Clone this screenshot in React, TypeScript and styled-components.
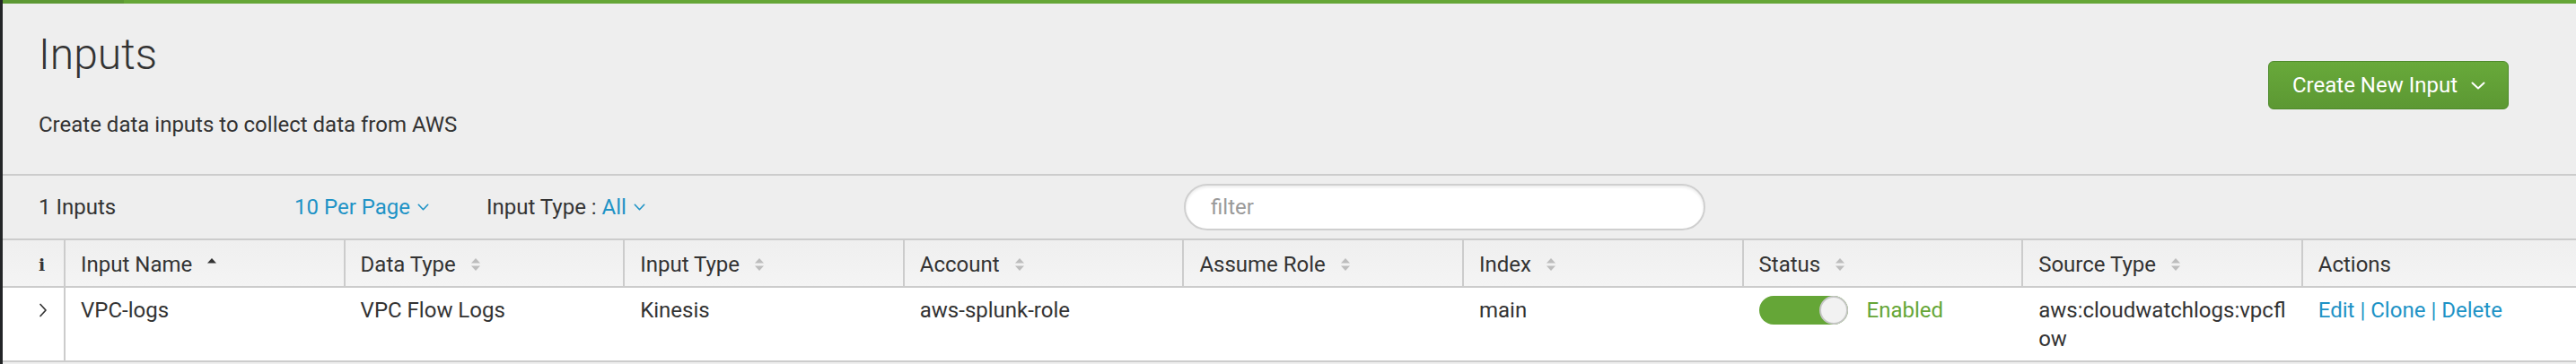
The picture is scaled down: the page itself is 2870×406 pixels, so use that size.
import React from 'react';
import styled, { createGlobalStyle } from 'styled-components';

const GlobalStyle = createGlobalStyle`
  html, body { margin: 0; padding: 0; background: #eeeeee; }
  body { font-family: Roboto, "Liberation Sans", Arial, sans-serif; color: #333333; }
  * { box-sizing: border-box; }
`;

const GREEN = '#65a637';
const BLUE = '#1e93c6';
const LINE = '#cccccc';

const Page = styled.div`
  border-left: 3px solid #232527;
  background: #eeeeee;
  min-height: 406px;
  overflow: hidden;
`;

const LoadBar = styled.div`
  height: 4px;
  background: ${GREEN};
  display: flex;
`;

const LoadDone = styled.div<{ $w: number }>`
  width: ${(p) => p.$w}px;
  background: #5c9834;
`;

const Header = styled.header`
  display: flex;
  justify-content: space-between;
  align-items: flex-start;
  padding: 29px 75px 39px 40px;
  border-bottom: 2px solid ${LINE};
`;

const TitleBlock = styled.div`
  display: flex;
  flex-direction: column;
`;

const Title = styled.h1`
  margin: 0;
  font-size: 48px;
  font-weight: 300;
  line-height: 56px;
  color: #333333;
`;

const Subtitle = styled.p`
  margin: 34px 0 0;
  font-size: 24px;
  line-height: 32px;
  color: #333333;
`;

const PrimaryButton = styled.button`
  margin-top: 35px;
  height: 54px;
  padding: 0 25px 0 26px;
  display: inline-flex;
  align-items: center;
  gap: 15px;
  font-family: Roboto, "Liberation Sans", Arial, sans-serif;
  font-size: 24px;
  color: #ffffff;
  background: linear-gradient(to bottom, #68a93a, #5c9833);
  border: 1px solid #4e8a2b;
  border-radius: 6px;
  cursor: pointer;
`;

const Toolbar = styled.div`
  display: flex;
  align-items: center;
  height: 72px;
  padding-left: 40px;
  border-bottom: 2px solid ${LINE};
`;

const ToolItem = styled.div<{ $w: number }>`
  width: ${(p) => p.$w}px;
  flex: none;
  font-size: 24px;
  line-height: 32px;
  display: flex;
  align-items: center;
  white-space: nowrap;
`;

const Dropdown = styled.span`
  color: ${BLUE};
  display: inline-flex;
  align-items: center;
  gap: 8px;
  cursor: pointer;
`;

const FilterInput = styled.input`
  width: 581px;
  height: 52px;
  flex: none;
  border: 2px solid #cfcfcf;
  border-radius: 26px;
  background: #ffffff;
  box-shadow: inset 0 2px 3px rgba(0, 0, 0, 0.08);
  padding: 0 28px;
  font-family: Roboto, "Liberation Sans", Arial, sans-serif;
  font-size: 24px;
  color: #333333;
  outline: none;
  &::placeholder { color: #9a9a9a; }
`;

const Table = styled.table`
  width: 100%;
  table-layout: fixed;
  border-collapse: separate;
  border-spacing: 0;
`;

const Th = styled.th<{ $first?: boolean; $last?: boolean }>`
  width: ${(p) => (p.$first ? '70px' : p.$last ? 'auto' : '311.6px')};
  padding: ${(p) => (p.$first ? '10px 0 8px 40px' : '10px 17px 8px 17px')};
  text-align: left;
  font-weight: 400;
  font-size: 24px;
  line-height: 32px;
  color: #333333;
  white-space: nowrap;
  background: linear-gradient(to bottom, #efefef, #f4f4f4);
  border-bottom: 2px solid ${LINE};
  border-right: ${(p) => (p.$last ? 'none' : `2px solid ${LINE}`)};
`;

const HeadLabel = styled.span`
  display: inline-flex;
  align-items: center;
  gap: 16px;
`;

const InfoGlyph = styled.span`
  font-family: "DejaVu Serif", "Liberation Serif", serif;
  font-weight: 700;
  font-size: 19px;
  color: #333333;
`;

const Td = styled.td<{ $first?: boolean }>`
  padding: ${(p) => (p.$first ? '9px 0 8px 40px' : '9px 17px 8px 17px')};
  vertical-align: top;
  background: #ffffff;
  font-size: 24px;
  line-height: 32px;
  color: #333333;
  word-break: break-all;
  border-bottom: 2px solid ${LINE};
  border-right: ${(p) => (p.$first ? `2px solid ${LINE}` : 'none')};
`;

const Expander = styled.span`
  display: inline-flex;
  height: 32px;
  align-items: center;
  color: #333333;
`;

const StatusCell = styled.div`
  display: flex;
  align-items: center;
  gap: 21px;
`;

const Toggle = styled.span<{ $on: boolean }>`
  position: relative;
  display: inline-block;
  width: 99px;
  height: 32px;
  border-radius: 16px;
  background: ${(p) => (p.$on ? GREEN : '#cccccc')};
  flex: none;
`;

const Knob = styled.span<{ $on: boolean }>`
  position: absolute;
  top: 0;
  ${(p) => (p.$on ? 'right: 0;' : 'left: 0;')}
  width: 32px;
  height: 32px;
  border-radius: 50%;
  background: #f2f2f2;
  border: 2px solid #c6c6c6;
`;

const StatusText = styled.span`
  color: ${GREEN};
`;

const ActionLink = styled.a`
  color: ${BLUE};
  text-decoration: none;
  cursor: pointer;
`;

const Sep = styled.span`
  color: ${BLUE};
  margin: 0 6px;
`;

const Chevron = ({ w, h, sw }: { w: number; h: number; sw: number }) => (
  <svg width={w} height={h} viewBox={`0 0 ${w} ${h}`} fill="none">
    <path
      d={`M${sw / 2 + 0.5} ${sw / 2 + 0.5} L${w / 2} ${h - sw / 2 - 0.5} L${w - sw / 2 - 0.5} ${sw / 2 + 0.5}`}
      stroke="currentColor"
      strokeWidth={sw}
      strokeLinecap="round"
      strokeLinejoin="round"
    />
  </svg>
);

const SortIcon = ({ state }: { state: 'none' | 'asc' }) => (
  <svg width="12" height="18" viewBox="0 0 12 18">
    <path d="M6 2 L11 7.5 L1 7.5 Z" fill={state === 'asc' ? '#333333' : '#bdbdbd'} />
    {state === 'none' && <path d="M1 10.5 L11 10.5 L6 16 Z" fill="#bdbdbd" />}
  </svg>
);

type Col = { label: string; sort?: 'none' | 'asc' };

const columns: Col[] = [
  { label: 'Input Name', sort: 'asc' },
  { label: 'Data Type', sort: 'none' },
  { label: 'Input Type', sort: 'none' },
  { label: 'Account', sort: 'none' },
  { label: 'Assume Role', sort: 'none' },
  { label: 'Index', sort: 'none' },
  { label: 'Status', sort: 'none' },
  { label: 'Source Type', sort: 'none' },
  { label: 'Actions' },
];

const rows = [
  {
    name: 'VPC-logs',
    dataType: 'VPC Flow Logs',
    inputType: 'Kinesis',
    account: 'aws-splunk-role',
    role: '',
    index: 'main',
    enabled: true,
    sourceType: 'aws:cloudwatchlogs:vpcflow',
  },
];

export default function App() {
  return (
    <>
      <GlobalStyle />
      <Page>
        <LoadBar>
          <LoadDone $w={135} />
        </LoadBar>
        <Header>
          <TitleBlock>
            <Title>Inputs</Title>
            <Subtitle>Create data inputs to collect data from AWS</Subtitle>
          </TitleBlock>
          <PrimaryButton>
            Create New Input
            <Chevron w={16} h={9} sw={2} />
          </PrimaryButton>
        </Header>
        <Toolbar>
          <ToolItem $w={285}>1 Inputs</ToolItem>
          <ToolItem $w={214}>
            <Dropdown>
              10 Per Page
              <Chevron w={13} h={8} sw={1.6} />
            </Dropdown>
          </ToolItem>
          <ToolItem $w={777}>
            Input Type :&nbsp;
            <Dropdown>
              All
              <Chevron w={13} h={8} sw={1.6} />
            </Dropdown>
          </ToolItem>
          <FilterInput placeholder="filter" />
        </Toolbar>
        <Table>
          <thead>
            <tr>
              <Th $first>
                <InfoGlyph>i</InfoGlyph>
              </Th>
              {columns.map((c, i) => (
                <Th key={c.label} $last={i === columns.length - 1}>
                  <HeadLabel>
                    {c.label}
                    {c.sort && <SortIcon state={c.sort} />}
                  </HeadLabel>
                </Th>
              ))}
            </tr>
          </thead>
          <tbody>
            {rows.map((r) => (
              <tr key={r.name}>
                <Td $first>
                  <Expander>
                    <svg width="10" height="16" viewBox="0 0 10 16" fill="none">
                      <path d="M2 1.5 L8 8 L2 14.5" stroke="currentColor" strokeWidth="1.7" strokeLinecap="round" strokeLinejoin="round" />
                    </svg>
                  </Expander>
                </Td>
                <Td>{r.name}</Td>
                <Td>{r.dataType}</Td>
                <Td>{r.inputType}</Td>
                <Td>{r.account}</Td>
                <Td>{r.role}</Td>
                <Td>{r.index}</Td>
                <Td>
                  <StatusCell>
                    <Toggle $on={r.enabled}>
                      <Knob $on={r.enabled} />
                    </Toggle>
                    <StatusText>{r.enabled ? 'Enabled' : 'Disabled'}</StatusText>
                  </StatusCell>
                </Td>
                <Td>{r.sourceType}</Td>
                <Td>
                  <ActionLink>Edit</ActionLink>
                  <Sep>|</Sep>
                  <ActionLink>Clone</ActionLink>
                  <Sep>|</Sep>
                  <ActionLink>Delete</ActionLink>
                </Td>
              </tr>
            ))}
          </tbody>
        </Table>
      </Page>
    </>
  );
}
